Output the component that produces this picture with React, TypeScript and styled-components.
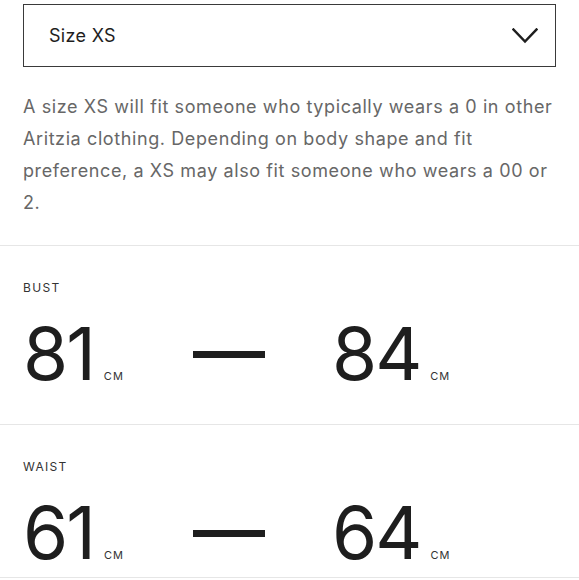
import React from 'react';
import styled, { createGlobalStyle } from 'styled-components';

const GlobalStyle = createGlobalStyle`
  html, body {
    margin: 0;
    padding: 0;
    background: #fff;
  }
  body {
    font-family: Inter, 'Noto Sans', sans-serif;
    color: #222;
  }
`;

const Page = styled.div`
  width: 579px;
  padding-top: 4px;
`;

const Inner = styled.div`
  padding: 0 23px;
`;

const Select = styled.div`
  box-sizing: border-box;
  height: 63px;
  display: flex;
  align-items: center;
  justify-content: space-between;
  padding: 0 17px 0 25px;
  border: 1.5px solid #3a3a3a;
  font-size: 18px;
  letter-spacing: 0.3px;
  color: #1e1e1e;
`;

const Chevron = styled.svg`
  display: block;
  width: 26px;
  height: 16px;
`;

const Description = styled.p`
  margin: 24px 0 26px;
  font-size: 18px;
  line-height: 32px;
  letter-spacing: 0.6px;
  color: #676767;
`;

const Section = styled.section<{ $last?: boolean }>`
  border-top: 1px solid #e6e6e6;
  border-bottom: ${({ $last }) => ($last ? '1px solid #e6e6e6' : 'none')};
  padding: 34px 23px ${({ $last }) => ($last ? '7px' : '33px')};
`;

const Label = styled.div`
  font-size: 12px;
  line-height: 16px;
  letter-spacing: 1.3px;
  text-transform: uppercase;
  color: #333;
`;

const Range = styled.div`
  display: flex;
  align-items: center;
  margin-top: 21px;
`;

const Value = styled.div<{ $width?: number }>`
  display: flex;
  align-items: baseline;
  width: ${({ $width }) => ($width ? `${$width}px` : 'auto')};
`;

const Number = styled.span`
  font-size: 73px;
  line-height: 74px;
  letter-spacing: -2px;
  color: #1e1e1e;
`;

const Unit = styled.span`
  margin-left: 10px;
  font-size: 11px;
  letter-spacing: 1px;
  color: #333;
`;

const Dash = styled.div`
  width: 72px;
  height: 7px;
  margin: 0 67px 0 0;
  background: #1e1e1e;
`;

type Measure = { label: string; from: number; to: number };

const measures: Measure[] = [
  { label: 'Bust', from: 81, to: 84 },
  { label: 'Waist', from: 61, to: 64 },
];

const App: React.FC = () => (
  <Page>
    <GlobalStyle />
    <Inner>
      <Select>
        <span>Size XS</span>
        <Chevron viewBox='0 0 26 16' fill='none'>
          <polyline
            points='1.5,1.5 13,13.5 24.5,1.5'
            stroke='#1e1e1e'
            strokeWidth='2.5'
            strokeLinecap='square'
          />
        </Chevron>
      </Select>
      <Description>
        A size XS will fit someone who typically wears a 0 in other Aritzia clothing. Depending on
        body shape and fit preference, a XS may also fit someone who wears a 00 or 2.
      </Description>
    </Inner>
    {measures.map((m, i) => (
      <Section key={m.label} $last={i === measures.length - 1}>
        <Label>{m.label}</Label>
        <Range>
          <Value $width={170}>
            <Number>{m.from}</Number>
            <Unit>CM</Unit>
          </Value>
          <Dash />
          <Value>
            <Number>{m.to}</Number>
            <Unit>CM</Unit>
          </Value>
        </Range>
      </Section>
    ))}
  </Page>
);

export default App;
